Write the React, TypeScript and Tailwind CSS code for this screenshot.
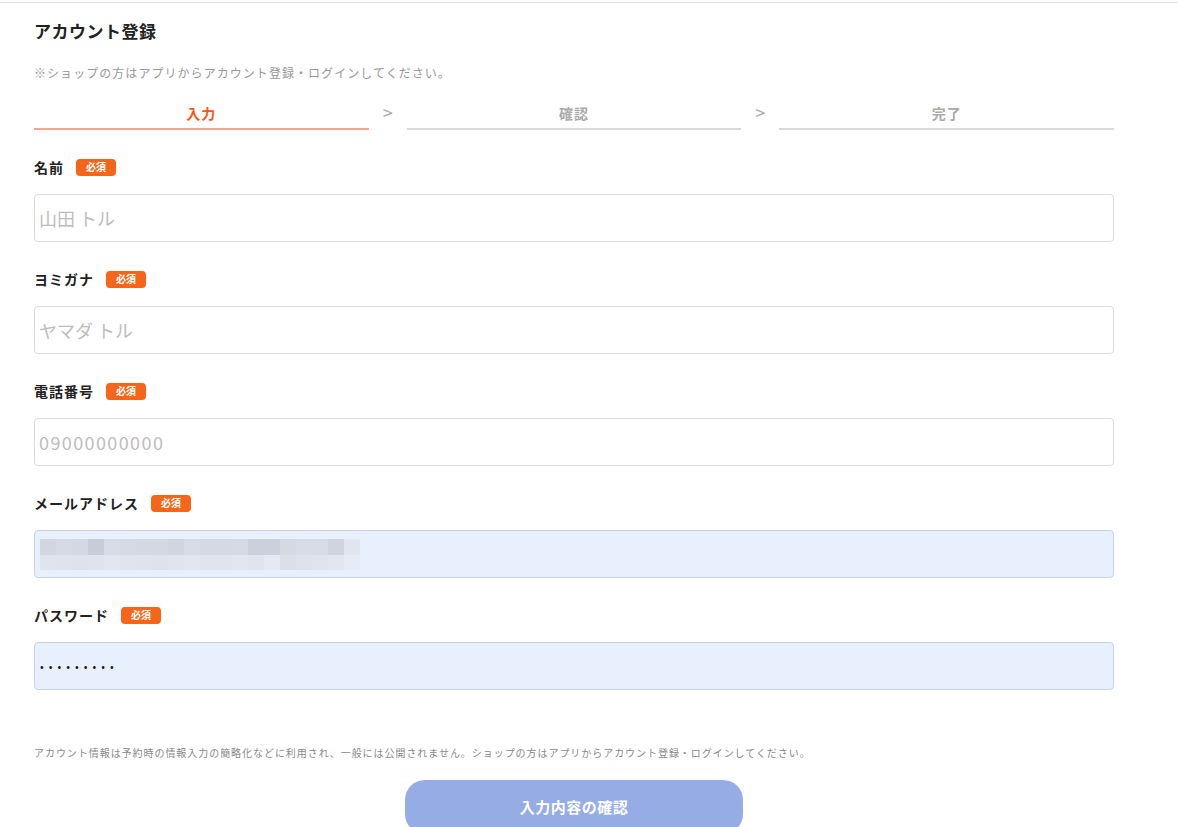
import React from "react";

const FONT = { fontFamily: '"Noto Sans CJK JP", "Noto Sans", sans-serif' };

/** Pixel blocks standing in for the blurred autofilled e-mail address. */
const BLUR_TOP = ["#d2d6e1", "#d6dae5", "#d4d8e3", "#c6ccd9", "#d8dce6", "#d6dae5", "#d3d8e3", "#d4d8e3", "#d0d5e0", "#d8dce6", "#d4d9e4", "#d5d9e4", "#d6dae5", "#cbd0dd", "#cbd0dd", "#d4d9e4", "#d8dce6", "#d8dce6", "#cfd4e0", "#e0e5f0"];
const BLUR_BOTTOM = ["#e0e4ee", "#dfe3ed", "#dde2ec", "#dfe3ed", "#e2e6f0", "#e0e4ee", "#dfe3ed", "#dee2ec", "#e0e4ee", "#e2e6f0", "#e0e4ee", "#e0e4ee", "#e2e6f0", "#e0e4ee", "#e4e9f5", "#dadfea", "#dde2ec", "#e0e4ee", "#e2e6f0", "#e6ebf6"];

function Badge() {
  return (
    <span className="ml-3 inline-flex h-[17px] w-[40px] items-center justify-center rounded-[4px] bg-[#f5661a] text-[10px] font-bold leading-none tracking-normal text-white">
      必須
    </span>
  );
}

function Field({
  label,
  children,
  last,
}: {
  label: string;
  children: React.ReactNode;
  last?: boolean;
}) {
  return (
    <div className={last ? "" : "mb-[27px]"}>
      <div className="flex h-[20px] items-center text-[14px] font-bold tracking-[1px] text-[#222]">
        {label}
        <Badge />
      </div>
      <div className="mt-[17px]">{children}</div>
    </div>
  );
}

function TextBox({ placeholder, wide }: { placeholder: string; wide?: boolean }) {
  return (
    <div
      className={
        "flex h-[48px] items-center rounded-[4px] border border-[#dcdcdc] bg-white pl-[4px] text-[18px] text-[#bdbdbd] " +
        (wide ? "tracking-[1.4px]" : "")
      }
    >
      {placeholder}
    </div>
  );
}

function Step({ label, active }: { label: string; active?: boolean }) {
  return (
    <div
      className={
        "flex-1 border-b-2 pb-[5px] text-center text-[14px] font-bold leading-[20px] tracking-[1px] " +
        (active ? "border-[#f8a68c] text-[#f4561a]" : "border-[#d9d9d9] text-[#aaaaaa]")
      }
    >
      {label}
    </div>
  );
}

function Chevron() {
  return (
    <div className="flex w-[38px] justify-center pb-[8px] text-[18px] leading-[20px] text-[#aaaaaa]">
      &gt;
    </div>
  );
}

export default function App() {
  return (
    <div className="min-h-[827px] bg-white" style={FONT}>
      <div className="h-[3px] border-b border-[#e4e4e4]" />
      <div className="mx-[34px] w-[1080px] pt-[16px]">
        <h1 className="text-[17px] font-bold leading-[24px] tracking-[0.5px] text-[#222]">アカウント登録</h1>
        <p className="mt-[21px] text-[12px] leading-[18px] tracking-[1.05px] text-[#999]">
          ※ショップの方はアプリからアカウント登録・ログインしてください。
        </p>

        <div className="mt-[20px] flex items-end">
          <Step label="入力" active />
          <Chevron />
          <Step label="確認" />
          <Chevron />
          <Step label="完了" />
        </div>

        <div className="mt-[27px]">
          <Field label="名前">
            <TextBox placeholder="山田 トル" />
          </Field>
          <Field label="ヨミガナ">
            <TextBox placeholder="ヤマダ トル" />
          </Field>
          <Field label="電話番号">
            <TextBox placeholder="09000000000" wide />
          </Field>
          <Field label="メールアドレス">
            <div className="flex h-[48px] flex-col justify-center rounded-[4px] border border-[#c9d2e3] bg-[#e8f0fe] pl-[5px]">
              <div className="flex">
                {BLUR_TOP.map((c, i) => (
                  <div key={i} className="h-[16px] w-[16px]" style={{ background: c }} />
                ))}
              </div>
              <div className="flex">
                {BLUR_BOTTOM.map((c, i) => (
                  <div key={i} className="h-[15px] w-[16px]" style={{ background: c }} />
                ))}
              </div>
            </div>
          </Field>
          <Field label="パスワード" last>
            <div className="flex h-[48px] items-center rounded-[4px] border border-[#c9d2e3] bg-[#e8f0fe] pl-[5px] text-[11px] tracking-[5px] text-[#222]">
              •••••••••
            </div>
          </Field>
        </div>

        <p className="mt-[56px] text-[10px] leading-[14px] tracking-[0.95px] text-[#888]">
          アカウント情報は予約時の情報入力の簡略化などに利用され、一般には公開されません。ショップの方はアプリからアカウント登録・ログインしてください。
        </p>

        <div className="mt-[20px] flex justify-center">
          <button className="h-[54px] w-[338px] rounded-[20px] bg-[#95ade4] text-[15px] font-bold tracking-[0.5px] text-white">
            入力内容の確認
          </button>
        </div>
      </div>
    </div>
  );
}
